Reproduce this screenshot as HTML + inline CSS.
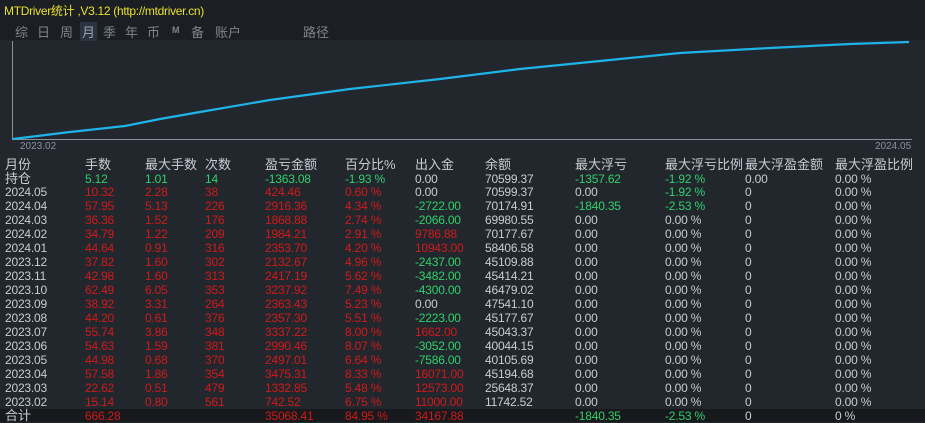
<!DOCTYPE html>
<html><head><meta charset="utf-8"><style>
body{margin:0;width:925px;height:422px;background:#22272e;overflow:hidden;position:relative;font-family:"Liberation Sans","Noto Sans CJK SC",sans-serif;}
.top{position:absolute;left:0;top:0;width:925px;height:40px;background:#1b1e22;}
.title{position:absolute;left:4px;top:2px;font-size:12px;color:#e8e030;letter-spacing:-0.3px}
.tabs{position:absolute;left:0;top:22px;font-size:13px;color:#7e848c}
.tabs span{position:absolute;top:0;white-space:nowrap}
.sel{background:#2b3340;color:#9aa4b4;padding:0 2px;}
.r{position:absolute;left:0;width:925px;height:14px;font-size:12px;line-height:14px;color:#c8ccd2;letter-spacing:-0.2px}
.r span{position:absolute;top:0;white-space:nowrap}
.r span:nth-child(1){left:5px}.r span:nth-child(2){left:85px}.r span:nth-child(3){left:145px}.r span:nth-child(4){left:205px}
.r span:nth-child(5){left:265px}.r span:nth-child(6){left:345px}.r span:nth-child(7){left:415px}.r span:nth-child(8){left:485px}
.r span:nth-child(9){left:575px}.r span:nth-child(10){left:665px}.r span:nth-child(11){left:745px}.r span:nth-child(12){left:835px}
.h{font-size:13px;color:#c8ccd2;letter-spacing:0}
.d{color:#d01a1a}.g{color:#2fd06a}
.foot{position:absolute;left:0;top:409px;width:925px;height:13px;background:#17191c}
.ax{position:absolute;font-size:10px;color:#8a9098}
</style></head><body>
<div class="top"></div>
<div class="title">MTDriver统计 ,V3.12 (http://mtdriver.cn)</div>
<div class="tabs">
<span style="left:15px">综</span><span style="left:37px">日</span><span style="left:60px">周</span><span class="sel" style="left:80px">月</span><span style="left:103px">季</span><span style="left:125px">年</span><span style="left:147px">币</span><span style="left:172px;font-size:9px;top:3px;font-weight:bold">M</span><span style="left:191px">备</span><span style="left:215px">账户</span><span style="left:303px">路径</span>
</div>
<svg style="position:absolute;left:0;top:0" width="925" height="160">
<line x1="12.5" y1="41" x2="12.5" y2="140" stroke="#8a9098" stroke-width="1"/>
<line x1="12" y1="139.5" x2="912" y2="139.5" stroke="#8a9098" stroke-width="1"/>
<polyline fill="none" stroke="#1fb4e8" stroke-width="2.2" points="13,139 70,132 125,126 160,119 200,112 270,100 350,89 440,79 520,69 600,61 680,53 770,48 850,44 909,42"/>
</svg>
<div class="ax" style="left:20px;top:141px">2023.02</div>
<div class="ax" style="left:875px;top:141px">2024.05</div>

<div class="r h" style="top:158px"><span>月份</span><span>手数</span><span>最大手数</span><span>次数</span><span>盈亏金额</span><span>百分比%</span><span>出入金</span><span>余额</span><span>最大浮亏</span><span>最大浮亏比例</span><span>最大浮盈金额</span><span>最大浮盈比例</span></div>
<div class="r" style="top:172px"><span class="h">持仓</span><span class="g">5.12</span><span class="g">1.01</span><span class="g">14</span><span class="g">-1363.08</span><span class="g">-1.93 %</span><span>0.00</span><span>70599.37</span><span class="g">-1357.62</span><span class="g">-1.92 %</span><span>0.00</span><span>0.00 %</span></div>
<div class="r" style="top:185px"><span>2024.05</span><span class="d">10.32</span><span class="d">2.28</span><span class="d">38</span><span class="d">424.46</span><span class="d">0.60 %</span><span>0.00</span><span>70599.37</span><span>0.00</span><span class="g">-1.92 %</span><span>0</span><span>0.00 %</span></div>
<div class="r" style="top:199px"><span>2024.04</span><span class="d">57.95</span><span class="d">5.13</span><span class="d">226</span><span class="d">2916.36</span><span class="d">4.34 %</span><span class="g">-2722.00</span><span>70174.91</span><span class="g">-1840.35</span><span class="g">-2.53 %</span><span>0</span><span>0.00 %</span></div>
<div class="r" style="top:213px"><span>2024.03</span><span class="d">36.36</span><span class="d">1.52</span><span class="d">176</span><span class="d">1868.88</span><span class="d">2.74 %</span><span class="g">-2066.00</span><span>69980.55</span><span>0.00</span><span>0.00 %</span><span>0</span><span>0.00 %</span></div>
<div class="r" style="top:227px"><span>2024.02</span><span class="d">34.79</span><span class="d">1.22</span><span class="d">209</span><span class="d">1984.21</span><span class="d">2.91 %</span><span class="d">9786.88</span><span>70177.67</span><span>0.00</span><span>0.00 %</span><span>0</span><span>0.00 %</span></div>
<div class="r" style="top:241px"><span>2024.01</span><span class="d">44.64</span><span class="d">0.91</span><span class="d">316</span><span class="d">2353.70</span><span class="d">4.20 %</span><span class="d">10943.00</span><span>58406.58</span><span>0.00</span><span>0.00 %</span><span>0</span><span>0.00 %</span></div>
<div class="r" style="top:255px"><span>2023.12</span><span class="d">37.82</span><span class="d">1.60</span><span class="d">302</span><span class="d">2132.67</span><span class="d">4.96 %</span><span class="g">-2437.00</span><span>45109.88</span><span>0.00</span><span>0.00 %</span><span>0</span><span>0.00 %</span></div>
<div class="r" style="top:269px"><span>2023.11</span><span class="d">42.98</span><span class="d">1.60</span><span class="d">313</span><span class="d">2417.19</span><span class="d">5.62 %</span><span class="g">-3482.00</span><span>45414.21</span><span>0.00</span><span>0.00 %</span><span>0</span><span>0.00 %</span></div>
<div class="r" style="top:283px"><span>2023.10</span><span class="d">62.49</span><span class="d">6.05</span><span class="d">353</span><span class="d">3237.92</span><span class="d">7.49 %</span><span class="g">-4300.00</span><span>46479.02</span><span>0.00</span><span>0.00 %</span><span>0</span><span>0.00 %</span></div>
<div class="r" style="top:297px"><span>2023.09</span><span class="d">38.92</span><span class="d">3.31</span><span class="d">264</span><span class="d">2363.43</span><span class="d">5.23 %</span><span>0.00</span><span>47541.10</span><span>0.00</span><span>0.00 %</span><span>0</span><span>0.00 %</span></div>
<div class="r" style="top:311px"><span>2023.08</span><span class="d">44.20</span><span class="d">0.61</span><span class="d">376</span><span class="d">2357.30</span><span class="d">5.51 %</span><span class="g">-2223.00</span><span>45177.67</span><span>0.00</span><span>0.00 %</span><span>0</span><span>0.00 %</span></div>
<div class="r" style="top:325px"><span>2023.07</span><span class="d">55.74</span><span class="d">3.86</span><span class="d">348</span><span class="d">3337.22</span><span class="d">8.00 %</span><span class="d">1662.00</span><span>45043.37</span><span>0.00</span><span>0.00 %</span><span>0</span><span>0.00 %</span></div>
<div class="r" style="top:339px"><span>2023.06</span><span class="d">54.63</span><span class="d">1.59</span><span class="d">381</span><span class="d">2990.46</span><span class="d">8.07 %</span><span class="g">-3052.00</span><span>40044.15</span><span>0.00</span><span>0.00 %</span><span>0</span><span>0.00 %</span></div>
<div class="r" style="top:353px"><span>2023.05</span><span class="d">44.98</span><span class="d">0.68</span><span class="d">370</span><span class="d">2497.01</span><span class="d">6.64 %</span><span class="g">-7586.00</span><span>40105.69</span><span>0.00</span><span>0.00 %</span><span>0</span><span>0.00 %</span></div>
<div class="r" style="top:367px"><span>2023.04</span><span class="d">57.58</span><span class="d">1.86</span><span class="d">354</span><span class="d">3475.31</span><span class="d">8.33 %</span><span class="d">16071.00</span><span>45194.68</span><span>0.00</span><span>0.00 %</span><span>0</span><span>0.00 %</span></div>
<div class="r" style="top:381px"><span>2023.03</span><span class="d">22.62</span><span class="d">0.51</span><span class="d">479</span><span class="d">1332.85</span><span class="d">5.48 %</span><span class="d">12573.00</span><span>25648.37</span><span>0.00</span><span>0.00 %</span><span>0</span><span>0.00 %</span></div>
<div class="r" style="top:395px"><span>2023.02</span><span class="d">15.14</span><span class="d">0.80</span><span class="d">561</span><span class="d">742.52</span><span class="d">6.75 %</span><span class="d">11000.00</span><span>11742.52</span><span>0.00</span><span>0.00 %</span><span>0</span><span>0.00 %</span></div>
<div class="foot"></div>
<div class="r" style="top:409px"><span class="h">合计</span><span class="d">666.28</span><span></span><span></span><span class="d">35068.41</span><span class="d">84.95 %</span><span class="d">34167.88</span><span></span><span class="g">-1840.35</span><span class="g">-2.53 %</span><span>0</span><span>0 %</span></div>
</body></html>
